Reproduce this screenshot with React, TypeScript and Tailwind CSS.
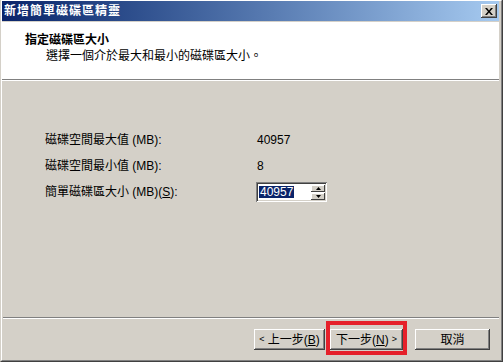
import React from "react";

const FONT = '"Liberation Sans", "Noto Sans CJK TC", sans-serif';

function Btn({ children, w }: { children: React.ReactNode; w: string }) {
  return (
    <div className={`${w} h-[21px] bg-[#d4d0c8] flex items-center justify-center text-[12px] text-black shadow-[inset_-1px_-1px_#404040,inset_1px_1px_#ffffff,inset_-2px_-2px_#808080]`}>
      {children}
    </div>
  );
}

export default function App() {
  return (
    <div
      className="w-[503px] h-[362px] bg-[#d4d0c8] overflow-hidden"
      style={{ fontFamily: FONT }}
    >
      <div className="w-full h-full border-l border-r border-b border-l-[#d4d0c8] border-r-[#404040] border-b-[#404040]">
        <div className="w-full h-full flex flex-col border-l border-t border-r border-b border-l-white border-t-white border-r-[#808080] border-b-[#808080] pr-[2px]">
          {/* Title bar */}
          <div className="h-[20px] flex items-center justify-between bg-gradient-to-r from-[#0a246a] to-[#a6caf0] pl-[2px] pr-[2px]">
            <span className="text-white font-bold text-[12px] tracking-[1px] leading-none">
              新增簡單磁碟區精靈
            </span>
            <div className="w-[16px] h-[14px] bg-[#d4d0c8] flex items-center justify-center shadow-[inset_-1px_-1px_#404040,inset_1px_1px_#ffffff,inset_-2px_-2px_#808080]">
              <svg width="8" height="7" viewBox="0 0 8 7">
                <path d="M0 0h2l2 2.5L6 0h2L5 3.5 8 7H6L4 4.5 2 7H0l3-3.5z" fill="#000" />
              </svg>
            </div>
          </div>
          {/* Header */}
          <div className="mt-[1px] h-[57px] bg-white pl-[23px] pt-[11px]">
            <div className="text-[12px] font-bold text-black leading-[14px]">指定磁碟區大小</div>
            <div className="text-[12px] text-black leading-[14px] pl-[21px] mt-[2px]">
              選擇一個介於最大和最小的磁碟區大小。
            </div>
          </div>
          <div className="h-[1px] bg-[#808080]" />
          <div className="h-[1px] bg-white" />
          {/* Body */}
          <div className="flex-1 pl-[43px] pt-[46px] text-[12px] text-black">
            <div className="h-[26px] flex items-center">
              <div className="w-[212px]">磁碟空間最大值 (MB):</div>
              <div>40957</div>
            </div>
            <div className="h-[26px] flex items-center">
              <div className="w-[212px]">磁碟空間最小值 (MB):</div>
              <div>8</div>
            </div>
            <div className="h-[26px] flex items-center">
              <div className="w-[211px]">
                簡單磁碟區大小 (MB)(<span className="underline">S</span>):
              </div>
              <div className="w-[71px] h-[20px] bg-white flex items-center pl-[3px] pr-[2px] shadow-[inset_1px_1px_#808080,inset_-1px_-1px_#ffffff,inset_2px_2px_#404040,inset_-2px_-2px_#d4d0c8]">
                <span className="bg-[#0a246a] text-white leading-[12px] px-[1px]">40957</span>
                <div className="ml-auto flex flex-col gap-[1px]">
                  <div className="w-[14px] h-[7px] bg-[#d4d0c8] flex items-center justify-center shadow-[inset_-1px_-1px_#404040,inset_1px_1px_#ffffff]">
                    <svg width="5" height="3" viewBox="0 0 5 3"><path d="M2.5 0L5 3H0z" fill="#000" /></svg>
                  </div>
                  <div className="w-[14px] h-[7px] bg-[#d4d0c8] flex items-center justify-center shadow-[inset_-1px_-1px_#404040,inset_1px_1px_#ffffff]">
                    <svg width="5" height="3" viewBox="0 0 5 3"><path d="M0 0h5L2.5 3z" fill="#000" /></svg>
                  </div>
                </div>
              </div>
            </div>
          </div>
          <div className="h-[1px] bg-[#808080] ml-[1px]" />
          <div className="h-[1px] bg-white ml-[1px]" />
          {/* Buttons */}
          <div className="h-[41px] flex items-start justify-end pt-[10px] pr-[9px]">
            <Btn w="w-[71px]">
              <span className="text-[9px] mr-[3px]">&lt;</span>上一步(<span className="underline">B</span>)
            </Btn>
            <div className="relative ml-[5px]">
              <Btn w="w-[73px]">
                下一步(<span className="underline">N</span>)<span className="text-[9px] ml-[3px]">&gt;</span>
              </Btn>
              <div className="absolute left-[-4px] top-[-8px] w-[81px] h-[34px] border-[4px] border-[#e5202a] pointer-events-none" />
            </div>
            <div className="ml-[12px]">
              <Btn w="w-[75px]">取消</Btn>
            </div>
          </div>
        </div>
      </div>
    </div>
  );
}
